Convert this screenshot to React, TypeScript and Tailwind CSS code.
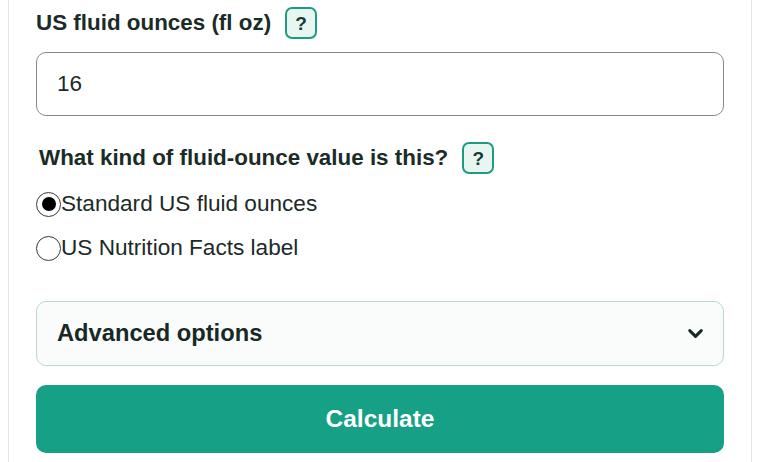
import React, { useState } from "react";
import { ChevronDown } from "lucide-react";

function Help() {
  return (
    <button
      type="button"
      className="w-[32px] h-[32px] rounded-[7px] border-2 border-[#1c9c82] bg-[#e8f6f2] text-[#123d37] text-[19px] font-bold flex items-center justify-center leading-none"
    >
      ?
    </button>
  );
}

function Radio({ checked, label, onClick }: { checked: boolean; label: string; onClick: () => void }) {
  return (
    <label className="flex items-center h-[26px] cursor-pointer" onClick={onClick}>
      <span className="w-[25px] h-[25px] rounded-full border-[1.5px] border-[#3a3a3a] bg-white flex items-center justify-center shrink-0">
        {checked && <span className="w-[14px] h-[14px] rounded-full bg-black" />}
      </span>
      <span className="text-[22.6px] text-[#1c2a28] leading-none">{label}</span>
    </label>
  );
}

export default function App() {
  const [sel, setSel] = useState(0);
  return (
    <div
      className="w-[760px] h-[462px] bg-white overflow-hidden px-[8px]"
      style={{ fontFamily: '"Liberation Sans", Arial, sans-serif' }}
    >
      <div className="h-full border-x border-[#dfe8e6] px-[27px] pt-[7px] flex flex-col">
        <div className="flex items-center gap-[14px] h-[32px]">
          <span className="text-[22.4px] font-bold text-[#1a2b28] leading-none">US fluid ounces (fl oz)</span>
          <Help />
        </div>
        <div className="mt-[13px] h-[64px] rounded-[10px] border-[1.5px] border-[#7e8d89] flex items-center px-[20px]">
          <span className="text-[22.5px] text-[#1c2a28] leading-none">16</span>
        </div>
        <div className="mt-[26px] flex items-center gap-[14px] h-[32px] pl-[3px]">
          <span className="text-[22.4px] font-bold text-[#1a2b28] leading-none">What kind of fluid-ounce value is this?</span>
          <Help />
        </div>
        <div className="mt-[17px] flex flex-col gap-[18px]">
          <Radio checked={sel === 0} label="Standard US fluid ounces" onClick={() => setSel(0)} />
          <Radio checked={sel === 1} label="US Nutrition Facts label" onClick={() => setSel(1)} />
        </div>
        <div className="mt-[40px] h-[65px] rounded-[10px] border-[1.5px] border-[#b9d8d0] bg-[#fafcfc] flex items-center justify-between pl-[20px] pr-[16px]">
          <span className="text-[23.7px] font-bold text-[#172825] leading-none">Advanced options</span>
          <ChevronDown size={23} strokeWidth={3.2} className="text-[#172825]" />
        </div>
        <button
          type="button"
          className="mt-[19px] h-[68px] rounded-[10px] bg-[#16a085] text-white text-[24.5px] font-bold flex items-center justify-center"
        >
          Calculate
        </button>
      </div>
    </div>
  );
}
